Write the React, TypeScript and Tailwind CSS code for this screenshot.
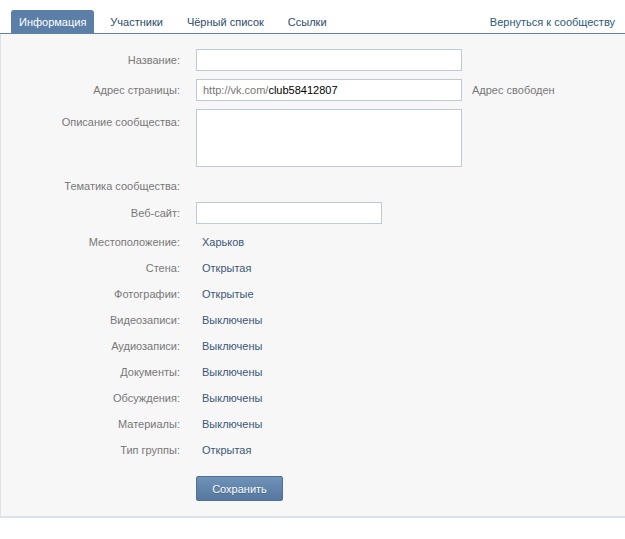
import type { ReactNode } from 'react';

const TABS = ['Информация', 'Участники', 'Чёрный список', 'Ссылки'];

const STATIC_ROWS: [string, string][] = [
  ['Местоположение:', 'Харьков'],
  ['Стена:', 'Открытая'],
  ['Фотографии:', 'Открытые'],
  ['Видеозаписи:', 'Выключены'],
  ['Аудиозаписи:', 'Выключены'],
  ['Документы:', 'Выключены'],
  ['Обсуждения:', 'Выключены'],
  ['Материалы:', 'Выключены'],
  ['Тип группы:', 'Открытая'],
];

function Label({ children }: { children: ReactNode }) {
  return <div className="w-[179px] shrink-0 text-right text-[#777]">{children}</div>;
}

export default function App() {
  return (
    <div className="w-[625px] bg-white text-[11px] leading-[14px] font-['Liberation_Sans',Arial,sans-serif]">
      {/* вкладки */}
      <div className="flex h-[34px] items-end border-b border-[#5e82a8] pl-[11px] pr-[10px]">
        <div className="flex flex-1 gap-[8px]">
          {TABS.map((t, i) => (
            <div
              key={t}
              className={
                i === 0
                  ? 'flex h-[23px] items-center rounded-t-[3px] bg-[#5b7fa6] px-[8px] text-white'
                  : 'flex h-[23px] items-center px-[8px] text-[#2b4a6b]'
              }
            >
              {t}
            </div>
          ))}
        </div>
        <div className="flex h-[23px] items-center text-[#2b587a]">Вернуться к сообществу</div>
      </div>

      {/* форма */}
      <div className="border-b-2 border-l border-[#dbe2ea] bg-[#f7f7f7] pt-[15px] pb-[15px]">
        <div className="flex items-center gap-[16px]">
          <Label>Название:</Label>
          <div className="h-[22px] w-[266px] border border-[#c0cad5] bg-white" />
        </div>

        <div className="mt-[8px] flex items-center gap-[16px]">
          <Label>Адрес страницы:</Label>
          <div className="flex items-center gap-[10px]">
            <div className="flex h-[22px] w-[266px] items-center border border-[#c0cad5] bg-white px-[6px]">
              <span className="text-[#777]">http://vk.com/</span>
              <span className="text-black">club58412807</span>
            </div>
            <div className="text-[#777]">Адрес свободен</div>
          </div>
        </div>

        <div className="mt-[8px] flex gap-[16px]">
          <div className="w-[179px] shrink-0 pt-[6px] text-right text-[#777]">Описание сообщества:</div>
          <div className="h-[58px] w-[266px] border border-[#c0cad5] bg-white" />
        </div>

        <div className="mt-[6px] flex h-[26px] items-center gap-[16px]">
          <Label>Тематика сообщества:</Label>
        </div>

        <div className="mt-[3px] flex items-center gap-[16px]">
          <Label>Веб-сайт:</Label>
          <div className="h-[22px] w-[186px] border border-[#c0cad5] bg-white" />
        </div>

        <div className="mt-[5px]">
          {STATIC_ROWS.map(([label, value]) => (
            <div key={label} className="flex h-[26px] items-center gap-[16px]">
              <Label>{label}</Label>
              <div className="pl-[6px] text-[#3b5877]">{value}</div>
            </div>
          ))}
        </div>

        <div className="mt-[13px] pl-[195px]">
          <button className="h-[25px] w-[87px] rounded-[2px] border border-[#4f7199] bg-gradient-to-b from-[#6f92b9] to-[#56789f] text-white [text-shadow:0_1px_0_#45658a]">
            Сохранить
          </button>
        </div>
      </div>
    </div>
  );
}
